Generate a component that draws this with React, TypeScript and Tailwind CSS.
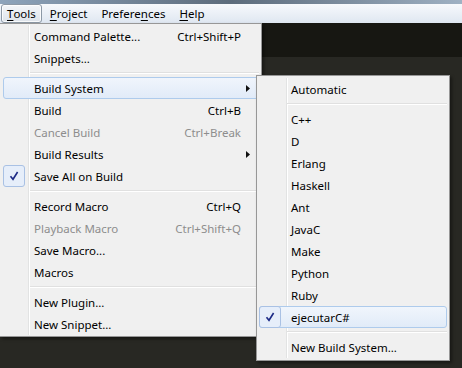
import React from "react";

type Item =
  | { sep: true }
  | {
      sep?: false;
      label: string;
      shortcut?: string;
      disabled?: boolean;
      checked?: boolean;
      active?: boolean;
      arrow?: boolean;
    };

const toolsMenu: Item[] = [
  { label: "Command Palette...", shortcut: "Ctrl+Shift+P" },
  { label: "Snippets..." },
  { sep: true },
  { label: "Build System", arrow: true, active: true },
  { label: "Build", shortcut: "Ctrl+B" },
  { label: "Cancel Build", shortcut: "Ctrl+Break", disabled: true },
  { label: "Build Results", arrow: true },
  { label: "Save All on Build", checked: true },
  { sep: true },
  { label: "Record Macro", shortcut: "Ctrl+Q" },
  { label: "Playback Macro", shortcut: "Ctrl+Shift+Q", disabled: true },
  { label: "Save Macro..." },
  { label: "Macros" },
  { sep: true },
  { label: "New Plugin..." },
  { label: "New Snippet..." },
];

const buildMenu: Item[] = [
  { label: "Automatic" },
  { sep: true },
  { label: "C++" },
  { label: "D" },
  { label: "Erlang" },
  { label: "Haskell" },
  { label: "Ant" },
  { label: "JavaC" },
  { label: "Make" },
  { label: "Python" },
  { label: "Ruby" },
  { label: "ejecutarC#", checked: true, active: true },
  { sep: true },
  { label: "New Build System..." },
];

const font = { fontFamily: '"Noto Sans", "Open Sans", sans-serif' };

function Check() {
  return (
    <svg width="10" height="10" viewBox="0 0 10 10">
      <path d="M1.5 5.2 L4 8.3 L8.6 1" fill="none" stroke="#1c2a86" strokeWidth="1.6" />
    </svg>
  );
}

function Arrow() {
  return (
    <svg width="4" height="7" viewBox="0 0 4 7">
      <path d="M0 0 L4 3.5 L0 7 Z" fill="#111" />
    </svg>
  );
}

function MenuRow({ item, sub }: { item: Item; sub?: boolean }) {
  if (item.sep) {
    return (
      <div className="h-[8px] flex items-center">
        <div className={`${sub ? "ml-[28px]" : "ml-[27px]"} flex-1 border-t border-t-[#e0e0e0] border-b border-b-white`} />
      </div>
    );
  }
  const color = item.disabled ? "text-[#8d8d8d]" : "text-black";
  return (
    <div
      className={`relative flex h-[22px] items-center rounded-[3px] border pt-[1px] ${
        item.active
          ? "border-[#aecbec] bg-gradient-to-b from-[#f0f5fc] to-[#e1ebf8]"
          : "border-transparent"
      }`}
    >
      {item.checked && (
        <div className="absolute left-[-1px] top-[-1px] flex h-[22px] w-[22px] items-center justify-center rounded-[3px] border border-[#a9c1e4] bg-[#e6eefa]">
          <Check />
        </div>
      )}
      <span className={`${sub ? "pl-[31px]" : "pl-[30px]"} flex-1 ${color}`}>{item.label}</span>
      {item.shortcut && <span className={color}>{item.shortcut}</span>}
      <span className="flex w-[17px] justify-end pr-[8px]">{item.arrow && <Arrow />}</span>
    </div>
  );
}

function MenuLabel({ pre, key_, post, active }: { pre: string; key_: string; post: string; active?: boolean }) {
  return (
    <div
      className={`flex h-[19px] items-center rounded-[3px] border px-[5px] ${
        active
          ? "border-[#8d99a6] bg-gradient-to-b from-[#f4f6f9] to-[#dde3ea] shadow-[inset_0_0_0_1px_rgba(255,255,255,0.8)]"
          : "border-transparent"
      }`}
    >
      <span>{pre}</span>
      <span className="underline underline-offset-[2px]">{key_}</span>
      <span>{post}</span>
    </div>
  );
}

export default function App() {
  return (
    <div className="relative h-[368px] w-[462px] overflow-hidden bg-[#282823] text-[11.5px]" style={font}>
      <div className="flex h-full flex-col">
        <div className="h-[4px] bg-gradient-to-r from-[#8ea4bb] via-[#5d6c7c] to-[#9fb1c3]" />
        <div className="flex h-[19px] items-center gap-[2px] bg-gradient-to-b from-[#f7f9fc] to-[#dfe7f1] pl-[1px] text-black">
          <MenuLabel pre="" key_="T" post="ools" active />
          <MenuLabel pre="" key_="P" post="roject" />
          <MenuLabel pre="Prefere" key_="n" post="ces" />
          <MenuLabel pre="" key_="H" post="elp" />
        </div>
        <div className="h-[34px] bg-[#171712]" />
        <div className="flex-1 bg-[#282823]" />
      </div>

      {/* Tools menu */}
      <div className="absolute left-0 top-[23px] w-[262px] border border-l-0 border-[#979797] bg-[#f0f0f0] py-[1px] pl-[3px] pr-[2px] shadow-[2px_2px_3px_rgba(0,0,0,0.4)]">
        <div className="absolute bottom-[1px] left-[28px] top-[1px] w-[2px] border-l border-l-[#e2e3e3] border-r border-r-white" />
        <div className="relative flex flex-col">
          {toolsMenu.map((it, i) => (
            <MenuRow key={i} item={it} />
          ))}
        </div>
      </div>

      {/* Build System submenu */}
      <div className="absolute left-[256px] top-[75px] w-[194px] border border-[#979797] bg-[#f0f0f0] p-[2px] shadow-[2px_2px_3px_rgba(0,0,0,0.4)]">
        <div className="absolute bottom-[2px] left-[29px] top-[2px] w-[2px] border-l border-l-[#e2e3e3] border-r border-r-white" />
        <div className="relative flex flex-col">
          {buildMenu.map((it, i) => (
            <MenuRow key={i} item={it} sub />
          ))}
        </div>
      </div>
    </div>
  );
}
